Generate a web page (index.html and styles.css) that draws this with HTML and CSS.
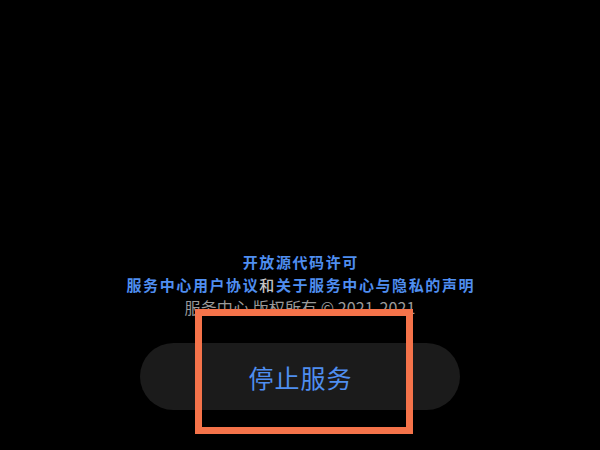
FILE: index.html
```html
<!DOCTYPE html>
<html lang="zh-CN">
<head>
<meta charset="utf-8">
<link rel="stylesheet" href="styles.css">
</head>
<body>
<main class="screen">
  <div class="legal">
    <p class="line"><a class="link">开放源代码许可</a></p>
    <p class="line"><a class="link">服务中心用户协议</a><span class="plain">和</span><a class="link">关于服务中心与隐私的声明</a></p>
    <p class="copyright">服务中心 版权所有 © 2021-2021</p>
  </div>
  <button class="stop">停止服务</button>
</main>
<div class="highlight"></div>
</body>
</html>
```
FILE: styles.css
```css
html, body {
  margin: 0;
  padding: 0;
  background: #000;
}
body {
  width: 600px;
  height: 450px;
  overflow: hidden;
  position: relative;
  font-family: "Noto Sans CJK SC", "Noto Sans", sans-serif;
}
.screen {
  height: 450px;
  box-sizing: border-box;
  display: flex;
  flex-direction: column;
  align-items: center;
  justify-content: flex-end;
  padding-bottom: 40px;
}
.legal {
  display: flex;
  flex-direction: column;
  align-items: center;
}
.line {
  margin: 0;
  font-size: 15px;
  line-height: 23px;
  font-weight: 700;
  letter-spacing: 1.6px;
  padding-left: 1.6px;
}
.link {
  color: #4f8ef0;
}
.plain {
  color: #c4c4c4;
  font-weight: 500;
}
.copyright {
  margin: 0;
  font-size: 16px;
  line-height: 23px;
  color: #9a9a9a;
  letter-spacing: 0.1px;
}
.stop {
  margin-top: 24px;
  width: 320px;
  height: 67px;
  border: none;
  border-radius: 34px;
  background: #1b1b1b;
  color: #4f8ef0;
  font-family: "Noto Sans CJK SC", "Noto Sans", sans-serif;
  font-size: 25px;
  letter-spacing: 1px;
  padding: 0 0 0 1px;
}
.highlight {
  position: absolute;
  left: 195px;
  top: 309px;
  width: 218px;
  height: 125px;
  box-sizing: border-box;
  border: 7px solid #f5734a;
}
```
